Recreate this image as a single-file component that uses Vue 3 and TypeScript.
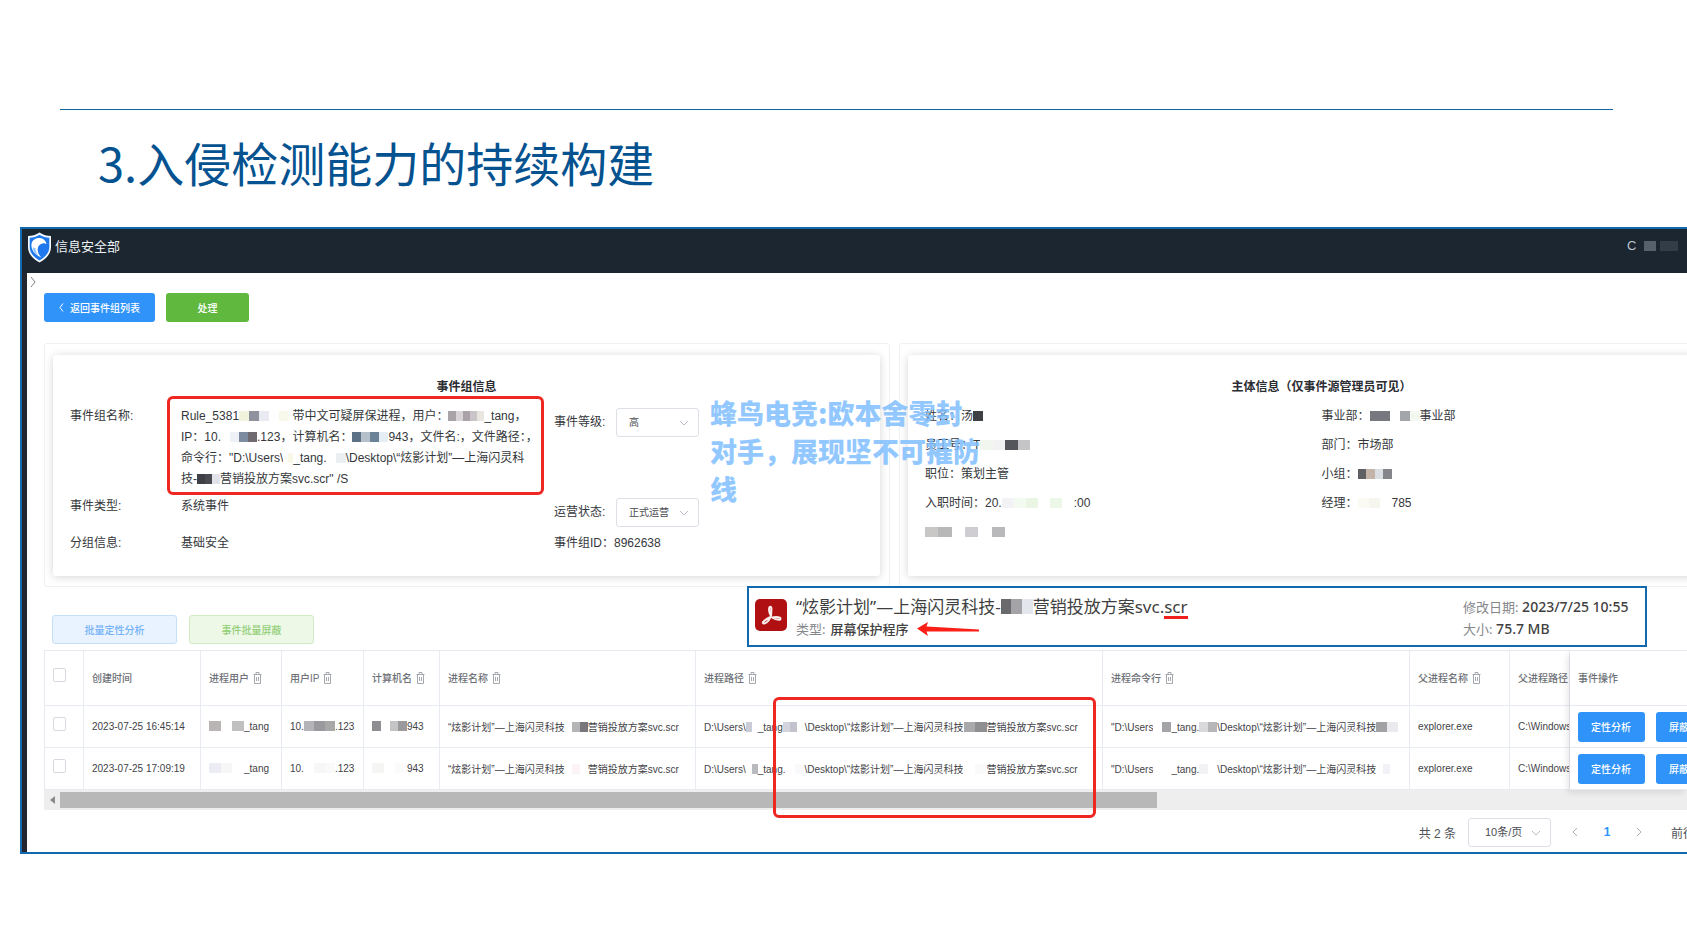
<script setup lang="ts">
import { h, ref } from 'vue'
import type { FunctionalComponent } from 'vue'

interface Mask {
  width: number
  cells: string[]
}
type Part = string | Mask

interface EventRow {
  time: string
  user: Part[]
  ip: Part[]
  host: Part[]
  name: Part[]
  path: Part[]
  command: Part[]
  parent: string
  parentPath: string
}

const mask = (width: number, ...cells: string[]): Mask => ({ width, cells })

const MaskedText: FunctionalComponent<{ parts: Part[] }> = (props) =>
  props.parts.map((part) =>
    typeof part === 'string'
      ? h('span', part)
      : h(
          'span',
          { class: 'mosaic', style: { width: part.width + 'px' } },
          part.cells.map((background) => h('span', { class: 'mosaic-cell', style: { background } })),
        ),
  )
MaskedText.props = ['parts']

const level = ref('高')
const status = ref('正式运营')
const pageSize = ref('10条/页')

const ruleLines: Part[][] = [
  ['Rule_5381', mask(50, '#f1f3dc', '#8f919c', '#e9eaf2', '#ffffff', '#f8f9ea'), ' 带中文可疑屏保进程，用户：', mask(36, '#a9a3a8', '#d8d4d8', '#aaa2a8', '#c9c5c9', '#e8e6df'), '_tang，'],
  ['IP：10.', mask(36, '#ffffff', '#eef1f6', '#7c8ba0', '#6e6a70'), '.123，计算机名：', mask(36, '#5c7086', '#b6c0ca', '#6c8296', '#e6eef5'), '943，文件名:，文件路径：，'],
  ['命令行："D:\\Users\\', mask(10, '#ffffff', '#f9f8e6'), '_tang.', mask(19, '#ffffff', '#eceff2'), '\\Desktop\\“炫影计划”—上海闪灵科'],
  ['技-', mask(23, '#3f4046', '#4a4b51', '#e2e3ea'), '营销投放方案svc.scr" /S'],
]

const subjectLeft: Part[][] = [
  ['姓名：汤', mask(10, '#3f4044')],
  ['员工号：T', mask(50, '#f1f6ee', '#f2f2f2', '#55565b', '#c5c5c8')],
  ['职位：策划主管'],
  ['入职时间：20.', mask(72, '#f3f3f5', '#f3faf0', '#eaf5e4', '#ffffff', '#edf7e7', '#ffffff'), ':00'],
  [mask(80, '#c9c7c6', '#b9b8b8', '#ffffff', '#cfcdd1', '#ffffff', '#b9b9bc')],
]

const subjectRight: Part[][] = [
  ['事业部：', mask(50, '#77787f', '#77787f', '#ffffff', '#a2a6aa', '#f3f8f1'), '事业部'],
  ['部门：市场部'],
  ['小组：', mask(34, '#5f6064', '#c3b3a8', '#dbdfe4', '#85868c')],
  ['经理：', mask(34, '#fbfbf3', '#f6f6ef', '#ffffff'), '785'],
]

const headers: { title: string; removable: boolean }[] = [
  { title: '创建时间', removable: false },
  { title: '进程用户', removable: true },
  { title: '用户IP', removable: true },
  { title: '计算机名', removable: true },
  { title: '进程名称', removable: true },
  { title: '进程路径', removable: true },
  { title: '进程命令行', removable: true },
  { title: '父进程名称', removable: true },
  { title: '父进程路径', removable: false },
]

const plan = '“炫影计划”—上海闪灵科技'

const rows: EventRow[] = [
  {
    time: '2023-07-25 16:45:14',
    user: [mask(35, '#b9b5b5', '#ffffff', '#c0c0c0'), '_tang'],
    ip: ['10.', mask(31, '#b4b4b8', '#9a9a9e', '#a8a8a8'), '.123'],
    host: [mask(35, '#8e8e92', '#ffffff', '#c4c4c6', '#9a9a9c'), '943'],
    name: [plan, mask(23, '#ffffff', '#b5b5b8', '#78787c'), '营销投放方案svc.scr'],
    path: ['D:\\Users\\', mask(12, '#c9cbd6', '#ffffff'), '_tang', mask(22, '#d3d4de', '#c2c3cd', '#ffffff'), '\\Desktop\\' + plan, mask(23, '#a9a9ac', '#8f8f92'), '营销投放方案svc.scr'],
    command: ['"D:\\Users', mask(18, '#ffffff', '#a3a4a8'), '_tang.', mask(18, '#d9d9db', '#b6b6b8'), '\\Desktop\\' + plan, mask(22, '#a2a2a5', '#e9e9ee')],
    parent: 'explorer.exe',
    parentPath: 'C:\\Windows',
  },
  {
    time: '2023-07-25 17:09:19',
    user: [mask(35, '#ececf4', '#f6f6f6', '#ffffff'), '_tang'],
    ip: ['10.', mask(31, '#ffffff', '#f7f7f7', '#fafafa'), '.123'],
    host: [mask(35, '#f5f5f3', '#ffffff', '#fbfbfb'), '943'],
    name: [plan, mask(23, '#ffffff', '#fbf3f7', '#ffffff'), '营销投放方案svc.scr'],
    path: ['D:\\Users\\', mask(12, '#ffffff', '#b9bac0'), '_tang.', mask(19, '#ffffff', '#fafafd'), '\\Desktop\\' + plan, mask(23, '#ffffff', '#fafafa'), '营销投放方案svc.scr'],
    command: ['"D:\\Users', mask(18, '#ffffff'), '_tang.', mask(18, '#f2f2f4', '#ffffff'), '\\Desktop\\' + plan, mask(14, '#ffffff', '#f1f1f7')],
    parent: 'explorer.exe',
    parentPath: 'C:\\Windows',
  },
]

const userName: Part[] = ['C', mask(8), mask(12, '#56616b'), mask(4), mask(18, '#323d48')]
const fileName: Part[] = ['“炫影计划”—上海闪灵科技-', mask(32, '#6a6a6d', '#a4a4a8', '#e3e6ec'), '营销投放方案svc.']
</script>

<template>
  <main class="slide">
    <hr class="rule" />
    <h1 class="slide-title">3.入侵检测能力的持续构建</h1>

    <section class="frame">
      <header class="topbar">
        <svg class="shield" viewBox="0 0 25 31" aria-hidden="true">
          <path d="M12.500 .5C9 3 5 4 1 4v11c0 7 5 12 11.500 15.500C19 27 24 22 24 15V4C20 4 16 3 12.500.5Z" fill="#f4f9ff" />
          <path d="M12.500 2.800C9.500 4.700 6 5.700 2.700 5.800V15c0 6 4.300 10.300 9.800 13.400C18 25.300 22.300 21 22.300 15V5.800C19 5.700 15.500 4.700 12.500 2.800Z" fill="#1f78ee" />
          <path d="M4.500 12C5 8 9 5.500 13 6c3 .4 6 2.500 6.500 6-1.500-.9-2.600-1-4-.6-3 .6-5 3-4.800 6.600.2 3 1.800 5.500 3.500 7.500C8.500 23 3.800 18 4.500 12Z" fill="#fff" />
          <path d="M5.500 15.500c1 4 3 6.500 6 8.500-2-3-3-5-3.200-8Z" fill="#8fc3ff" />
        </svg>
        <span class="brand">信息安全部</span>
        <span class="user"><MaskedText :parts="userName" /></span>
      </header>

      <div class="body">
        <button class="expand" type="button" aria-label="展开">
          <svg viewBox="0 0 6 12"><path d="M1 1l4 5-4 5" /></svg>
        </button>

        <div class="actions">
          <button class="btn primary back" type="button">
            <svg viewBox="0 0 5 9" aria-hidden="true"><path d="M4 .5L1 4.500l3 4" /></svg>
            返回事件组列表
          </button>
          <button class="btn success" type="button">处理</button>
        </div>

        <div class="cards">
          <section class="card">
            <div class="card-inner">
              <h2>事件组信息</h2>
              <div class="info">
                <span>事件组名称:</span>
                <div class="rule-text">
                  <div v-for="(line, i) in ruleLines" :key="i"><MaskedText :parts="line" /></div>
                </div>
                <div class="field">
                  <label for="level">事件等级:</label>
                  <span class="select">
                    <select id="level" v-model="level"><option>高</option><option>中</option><option>低</option></select>
                    <svg viewBox="0 0 10 6" aria-hidden="true"><path d="M1 1l4 4 4-4" /></svg>
                  </span>
                </div>
                <span>事件类型:</span>
                <span>系统事件</span>
                <div class="field">
                  <label for="status">运营状态:</label>
                  <span class="select">
                    <select id="status" v-model="status"><option>正式运营</option><option>测试运营</option></select>
                    <svg viewBox="0 0 10 6" aria-hidden="true"><path d="M1 1l4 4 4-4" /></svg>
                  </span>
                </div>
                <span>分组信息:</span>
                <span>基础安全</span>
                <span>事件组ID：8962638</span>
              </div>
            </div>
          </section>

          <section class="card">
            <div class="card-inner">
              <h2>主体信息（仅事件源管理员可见）</h2>
              <div class="subject">
                <div>
                  <p v-for="(line, i) in subjectLeft" :key="i"><MaskedText :parts="line" /></p>
                </div>
                <div>
                  <p v-for="(line, i) in subjectRight" :key="i"><MaskedText :parts="line" /></p>
                </div>
              </div>
            </div>
          </section>
        </div>

        <div class="batch">
          <button class="btn soft-blue" type="button">批量定性分析</button>
          <button class="btn soft-green" type="button">事件批量屏蔽</button>
        </div>

        <div class="table-wrap">
          <table>
            <colgroup>
              <col class="c-check" /><col class="c-time" /><col class="c-user" /><col class="c-ip" /><col class="c-host" />
              <col class="c-name" /><col class="c-path" /><col class="c-command" /><col class="c-parent" /><col class="c-parent-path" /><col />
            </colgroup>
            <thead>
              <tr>
                <th class="check"><input type="checkbox" aria-label="全选" /></th>
                <th v-for="head in headers" :key="head.title">
                  {{ head.title }}
                  <svg v-if="head.removable" class="bin" viewBox="0 0 9 12" aria-hidden="true">
                    <path d="M.5 2.500h8M3 2.500v-2h3v2M1.500 2.500v9h6v-9M3.500 5v4M5.500 5v4" />
                  </svg>
                </th>
                <th class="ops">事件操作</th>
              </tr>
            </thead>
            <tbody>
              <tr v-for="row in rows" :key="row.time">
                <td class="check"><input type="checkbox" :aria-label="row.time" /></td>
                <td>{{ row.time }}</td>
                <td><MaskedText :parts="row.user" /></td>
                <td><MaskedText :parts="row.ip" /></td>
                <td><MaskedText :parts="row.host" /></td>
                <td><MaskedText :parts="row.name" /></td>
                <td><MaskedText :parts="row.path" /></td>
                <td><MaskedText :parts="row.command" /></td>
                <td>{{ row.parent }}</td>
                <td>{{ row.parentPath }}</td>
                <td class="ops">
                  <div class="op-buttons">
                    <button class="btn primary op" type="button">定性分析</button>
                    <button class="btn primary op" type="button">屏蔽</button>
                  </div>
                </td>
              </tr>
            </tbody>
          </table>
          <div class="scrollbar">
            <svg viewBox="0 0 5 8" aria-hidden="true"><path d="M5 0v8L0 4Z" /></svg>
            <div class="thumb"></div>
          </div>
        </div>

        <nav class="pager" aria-label="分页">
          <span>共 2 条</span>
          <span class="select">
            <select v-model="pageSize" class="size" aria-label="每页条数"><option>10条/页</option><option>20条/页</option></select>
            <svg viewBox="0 0 10 6" aria-hidden="true"><path d="M1 1l4 4 4-4" /></svg>
          </span>
          <button type="button" aria-label="上一页"><svg viewBox="0 0 6 10"><path d="M5 1L1 5l4 4" /></svg></button>
          <button type="button" class="current">1</button>
          <button type="button" aria-label="下一页"><svg viewBox="0 0 6 10"><path d="M1 1l4 4-4 4" /></svg></button>
          <span class="goto">前往</span>
        </nav>
      </div>

      <div class="mark mark-rule"></div>
      <div class="mark mark-path"></div>

      <aside class="file">
        <svg class="pdf" viewBox="0 0 32 32" aria-hidden="true">
          <rect width="32" height="32" rx="5" fill="#b01012" />
          <g fill="none" stroke="#fbeeee" stroke-width="2" stroke-linecap="round" stroke-linejoin="round">
            <path d="M16 17c-1.600-3-2.200-6-1.800-8 .3-1.600 2-1.600 2.200 0 .2 2.400-.2 5.300-.4 8Z" />
            <path d="M15.500 18c-1.200 3-3.300 5.500-5.800 6.400-1.700.5-2.400-1-1.200-2 1.700-1.500 4.500-3.300 7-4.400Z" />
            <path d="M17 18.500c3-.7 6-.6 7.800.2 1.300.7.7 2.200-.8 2.100-2.400-.2-5-1.100-7-2.300Z" />
          </g>
        </svg>
        <div class="file-main">
          <div class="file-name"><MaskedText :parts="fileName" /><span class="ext">scr</span></div>
          <div class="file-type">
            <span class="key">类型:</span> 屏幕保护程序
            <svg class="arrow" viewBox="0 0 62 14" aria-hidden="true"><path d="M0 6.500L11 0 9.500 4.500 62 7.500v2L9.500 9.500 11 14Z" fill="#fb1f17" /></svg>
          </div>
        </div>
        <div class="file-meta">
          <div><span class="key">修改日期:</span> 2023/7/25 10:55</div>
          <div><span class="key">大小:</span> 75.7 MB</div>
        </div>
      </aside>

      <p class="watermark">蜂鸟电竞:欧本舍零封对手，展现坚不可摧防线</p>
    </section>
  </main>
</template>

<style>
body {
  margin: 0;
  background: #fff;
  overflow-x: hidden;
}
.mosaic {
  display: inline-flex;
  height: 10px;
  vertical-align: -1px;
}
.mosaic-cell {
  flex: 1;
}
</style>

<style scoped>
.slide {
  padding-top: 109px;
  font-family: "Liberation Sans", "Noto Sans CJK SC", sans-serif;
  font-size: 12px;
  color: #35373b;
  overflow: hidden;
}
button,
select {
  font-family: inherit;
}
svg {
  flex: none;
}
.rule {
  height: 1px;
  margin: 0 74px 0 60px;
  border: 0;
  background: #10659c;
}
.slide-title {
  margin: 24px 0 37px 98px;
  font: 400 47px/56px "Noto Sans CJK SC", sans-serif;
  color: #04528f;
}
.frame {
  position: relative;
  margin-left: 20px;
  border: 2px solid #1269ad;
  border-right: 0;
}
.topbar {
  display: flex;
  align-items: flex-start;
  height: 44px;
  padding: 3px 0 0 5px;
  box-sizing: border-box;
  background: #1b2630;
  color: #eef2f5;
}
.shield {
  width: 25px;
  height: 31px;
}
.brand {
  margin-left: 3px;
  font-size: 13px;
  line-height: 30px;
}
.user {
  width: 60px;
  margin-left: auto;
  font-size: 13px;
  line-height: 28px;
  color: #bcc8d2;
  white-space: nowrap;
}
.body {
  border-left: 5px solid #23262f;
  background: #fff;
  padding-left: 17px;
}
.expand {
  display: block;
  margin-left: -14px;
  padding: 3px 0 0;
  border: 0;
  background: none;
}
.expand svg {
  display: block;
  width: 6px;
  height: 12px;
  fill: none;
  stroke: #80838a;
}
.actions {
  display: flex;
  gap: 11px;
  padding: 5px 0 0 0;
}
.btn {
  display: flex;
  align-items: center;
  justify-content: center;
  box-sizing: border-box;
  height: 29px;
  padding: 0 13px;
  border: 0;
  border-radius: 3px;
  font-size: 10px;
  font-weight: 500;
  white-space: nowrap;
  color: #fff;
}
.primary {
  background: #2f93fa;
}
.success {
  width: 83px;
  background: #60b83e;
}
.back {
  width: 111px;
  gap: 6px;
}
.back svg {
  width: 5px;
  height: 9px;
  fill: none;
  stroke: #fff;
}
.cards {
  display: grid;
  grid-template-columns: 1fr 1fr;
  gap: 9px;
  margin: 21px -58px 0 0;
}
.card {
  padding: 11px 9px 10px 8px;
  border: 1px solid #eff0f2;
  border-radius: 3px;
}
.card-inner {
  height: 221px;
  box-sizing: border-box;
  padding: 22px 17px 0;
  border-radius: 3px;
  box-shadow: 0 1px 8px rgba(0, 0, 0, 0.17);
}
h2 {
  margin: 0;
  font-size: 12px;
  line-height: 20px;
  font-weight: 700;
  text-align: center;
  color: #2b2d33;
}
.info {
  display: grid;
  grid-template-columns: 111px 373px 1fr;
  row-gap: 6px;
  padding-top: 9px;
  line-height: 21px;
  white-space: nowrap;
}
.field {
  display: flex;
  align-items: center;
  align-self: start;
  gap: 10px;
  padding-top: 2px;
}
.field label {
  width: 52px;
}
.select {
  position: relative;
  display: inline-flex;
  width: 83px;
}
.select select {
  appearance: none;
  width: 100%;
  height: 29px;
  padding: 0 20px 0 12px;
  border: 1px solid #dcdfe6;
  border-radius: 3px;
  background: #fff;
  font-size: 10px;
  color: #4a4c52;
}
.select .size {
  padding-left: 16px;
  font-size: 11px;
}
.select svg {
  position: absolute;
  top: 12px;
  right: 10px;
  width: 10px;
  height: 6px;
  fill: none;
  stroke: #b9bdc5;
  pointer-events: none;
}
.subject {
  display: grid;
  grid-template-columns: 1fr 1fr;
  padding-top: 5px;
}
.subject p {
  margin: 0;
  line-height: 29px;
  white-space: nowrap;
}
.batch {
  display: flex;
  gap: 12px;
  padding: 28px 0 6px 8px;
}
.batch .btn {
  width: 125px;
  border: 1px solid;
}
.batch .soft-blue {
  background: #e9f3ff;
  border-color: #c6dff8;
  color: #74b2f7;
}
.batch .soft-green {
  background: #edf8e7;
  border-color: #d0ebc3;
  color: #93cf78;
}
.table-wrap {
  overflow: hidden;
}
table {
  width: 100%;
  table-layout: fixed;
  border-collapse: separate;
  border-spacing: 0;
  border-top: 1px solid #e6e9f0;
  border-left: 1px solid #e6e9f0;
  font-size: 10px;
}
.c-check { width: 39px; }
.c-time { width: 117px; }
.c-user { width: 81px; }
.c-ip { width: 82px; }
.c-host { width: 76px; }
.c-name { width: 256px; }
.c-path { width: 407px; }
.c-command { width: 307px; }
.c-parent { width: 100px; }
.c-parent-path { width: 60px; }
th,
td {
  box-sizing: border-box;
  height: 42px;
  padding: 0 0 0 8px;
  border-right: 1px solid #e8ebf1;
  border-bottom: 1px solid #e8ebf1;
  text-align: left;
  white-space: nowrap;
  overflow: hidden;
  color: #3f4247;
}
th {
  height: 55px;
  padding-bottom: 1px;
  font-weight: 500;
  color: #6d7076;
}
.bin {
  width: 9px;
  height: 12px;
  margin-left: 1px;
  vertical-align: -2px;
  fill: none;
  stroke: #a5a8ad;
}
.check {
  padding: 0 0 6px 8px;
}
.check input {
  display: block;
  appearance: none;
  width: 13px;
  height: 14px;
  margin: 0;
  border: 1px solid #d6d9e0;
  border-radius: 2px;
  background: #fff;
}
.ops {
  position: relative;
  border-right: 0;
  background: #fff;
  overflow: visible;
  box-shadow: -3px 3px 6px rgba(0, 0, 0, 0.09);
}
.op-buttons {
  display: flex;
  gap: 11px;
}
.op {
  width: 67px;
  height: 30px;
  flex: none;
  justify-content: flex-start;
}
.scrollbar {
  display: flex;
  align-items: center;
  height: 20px;
  background: #eee;
}
.scrollbar svg {
  width: 5px;
  height: 8px;
  margin: 0 5px 0 6px;
  fill: #8a8a8a;
}
.thumb {
  width: 1097px;
  height: 16px;
  background: #b8b8b8;
}
.pager {
  display: flex;
  align-items: center;
  justify-content: flex-end;
  height: 42px;
  padding-top: 2px;
  box-sizing: border-box;
  color: #505257;
}
.pager .select {
  margin: 0 8px 0 12px;
}
.pager button {
  display: flex;
  align-items: center;
  justify-content: center;
  width: 32px;
  height: 28px;
  padding: 0;
  border: 0;
  background: none;
}
.pager button svg {
  width: 6px;
  height: 10px;
  fill: none;
  stroke: #a9adb5;
}
.pager .current {
  font-size: 12px;
  font-weight: 700;
  color: #2f93fa;
}
.goto {
  width: 16px;
  margin-left: 16px;
  white-space: nowrap;
  overflow: hidden;
}
.mark {
  position: absolute;
  box-sizing: border-box;
  border: 3px solid #ee2821;
  border-radius: 6px;
  pointer-events: none;
}
.mark-rule {
  left: 145px;
  top: 167px;
  width: 377px;
  height: 99px;
}
.mark-path {
  left: 751px;
  top: 468px;
  width: 323px;
  height: 121px;
}
.file {
  position: absolute;
  left: 725px;
  right: 40px;
  top: 357px;
  box-sizing: border-box;
  height: 61px;
  display: flex;
  padding: 8px 16px 0 6px;
  border: 2px solid #1269ad;
  background: #fff;
  font-family: "Noto Sans", "Noto Sans CJK SC", sans-serif;
  white-space: nowrap;
  color: #3f3f41;
}
.pdf {
  width: 32px;
  height: 32px;
  margin-top: 3px;
}
.file-main {
  margin-left: 9px;
}
.file-name {
  font-size: 17px;
  line-height: 22px;
}
.file-name :deep(.mosaic) {
  height: 15px;
}
.ext {
  display: inline-block;
  height: 20px;
  line-height: 22px;
  border-bottom: 3px solid #f0201c;
}
.file-type {
  display: flex;
  align-items: center;
  gap: 8px;
  font-size: 13px;
  line-height: 20px;
  font-weight: 500;
}
.file-type .key {
  margin-right: -3px;
}
.arrow {
  width: 62px;
  height: 14px;
}
.file-meta {
  width: 166px;
  margin-left: auto;
  font-size: 14px;
  line-height: 22px;
  font-weight: 500;
}
.key {
  font-size: 13px;
  font-weight: 400;
  color: #85878b;
}
.watermark {
  position: absolute;
  left: 688px;
  top: 165px;
  width: 275px;
  margin: 0;
  font: 900 27px/38px "Noto Sans CJK SC", sans-serif;
  color: #7fbfff;
  opacity: 0.85;
}
</style>
